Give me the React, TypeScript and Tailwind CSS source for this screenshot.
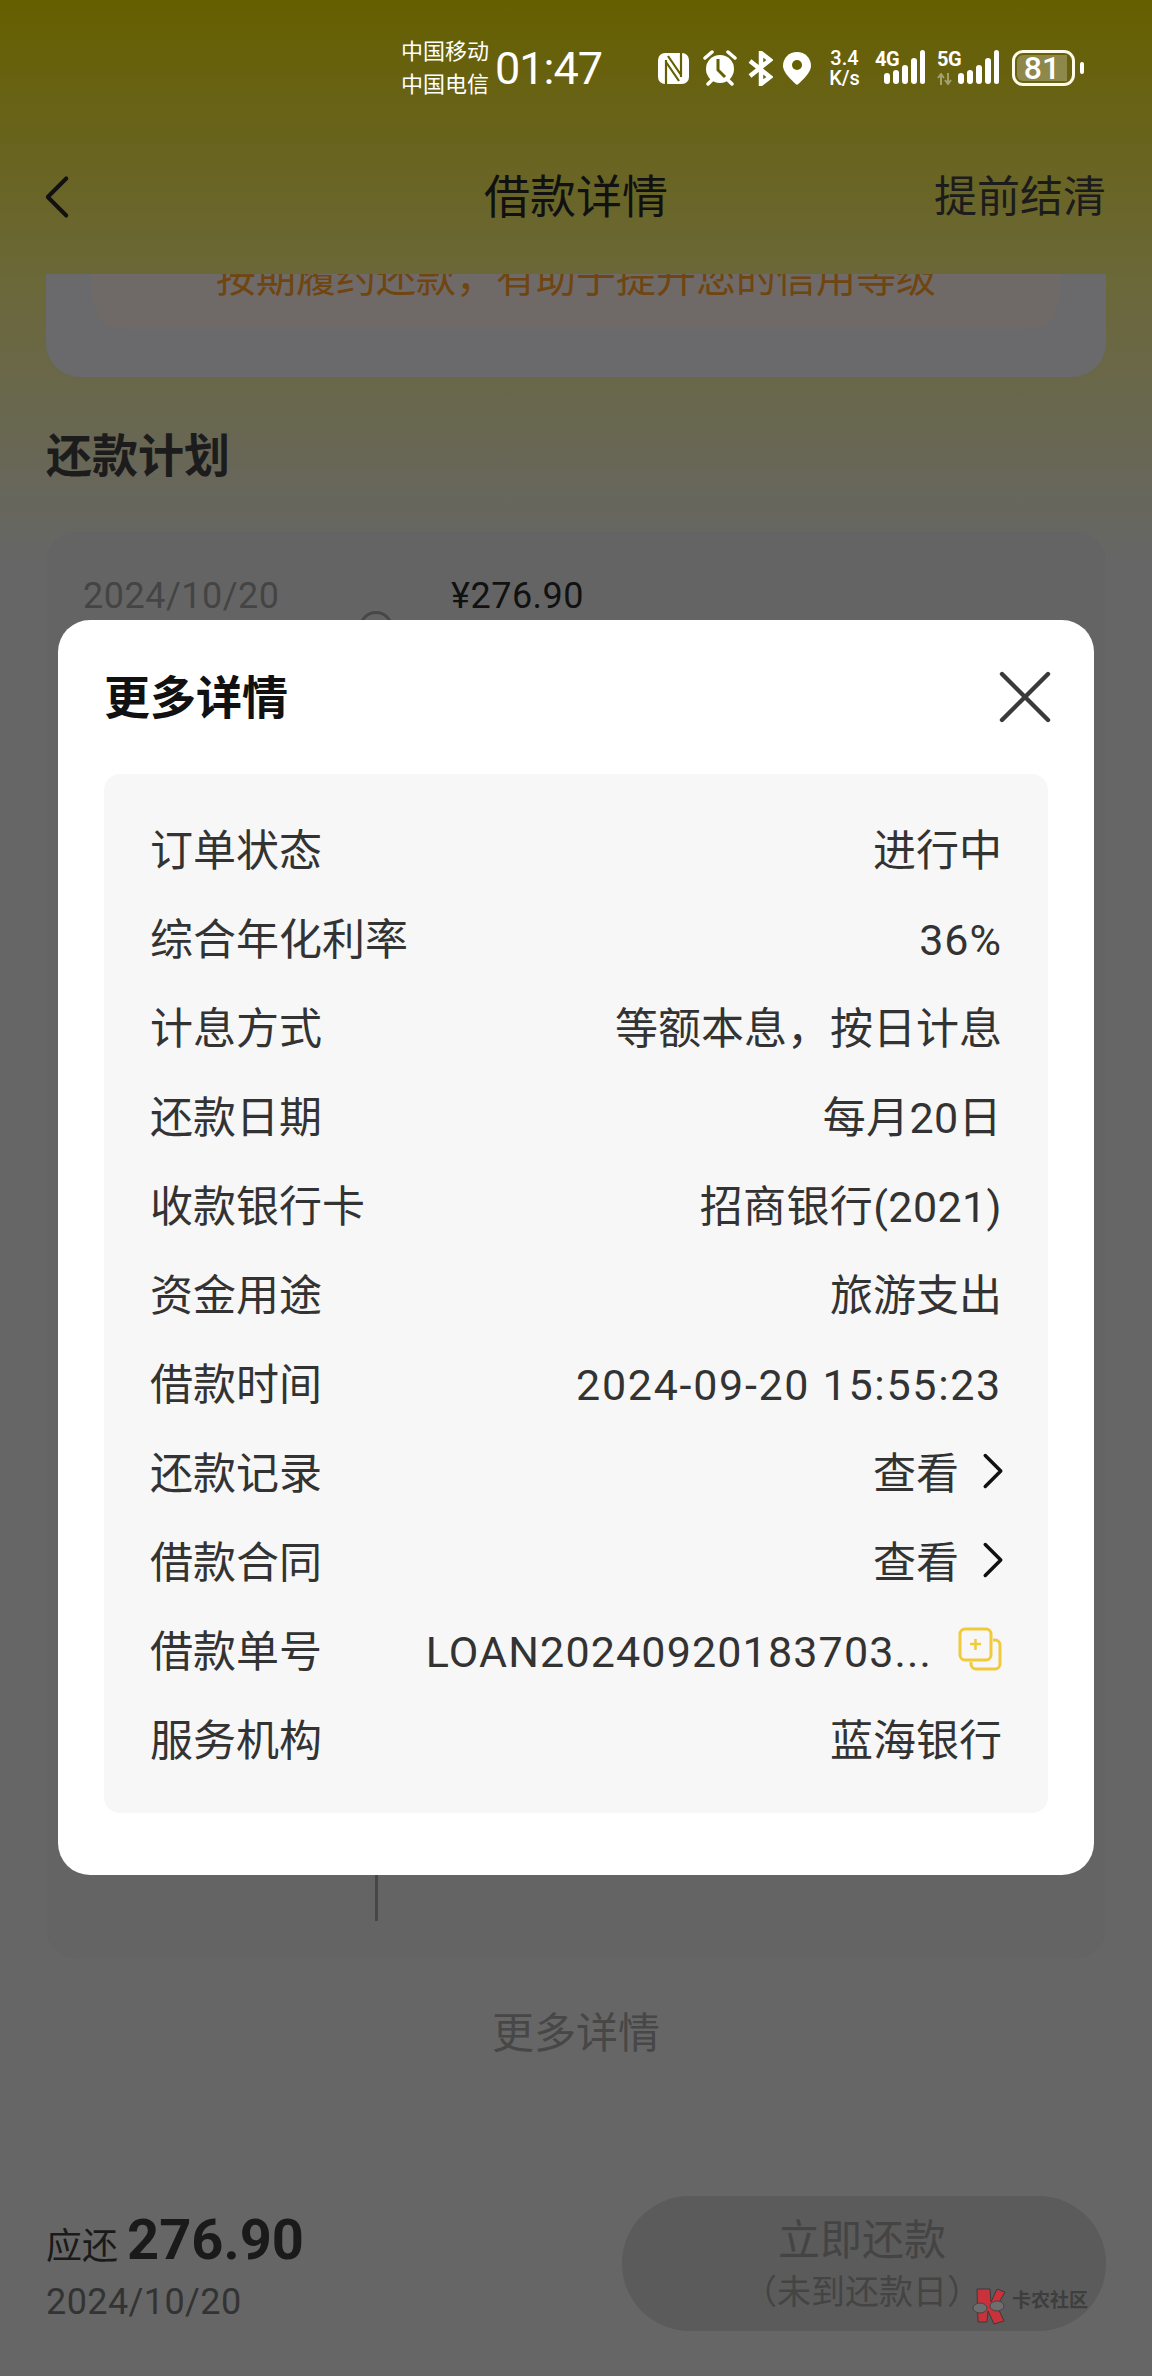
import { ChevronLeft, ChevronRight, X } from 'lucide-react';

const detailRows = [
  { label: '订单状态', value: '进行中' },
  { label: '综合年化利率', value: '36%', spacing: 'tracking-[1px]' },
  { label: '计息方式', value: '等额本息，按日计息' },
  { label: '还款日期', value: '每月20日', spacing: 'tracking-[0.4px]' },
  { label: '收款银行卡', value: '招商银行(2021)', spacing: 'tracking-[0.4px]' },
  { label: '资金用途', value: '旅游支出' },
  { label: '借款时间', value: '2024-09-20 15:55:23', spacing: 'tracking-[1.7px]' },
  { label: '还款记录', value: '查看', link: true },
  { label: '借款合同', value: '查看', link: true },
  { label: '借款单号', value: 'LOAN20240920183703...', spacing: 'tracking-[1.15px]', copy: true },
  { label: '服务机构', value: '蓝海银行' },
];

function SignalIcon({ label, wide }: { label: string; wide?: boolean }) {
  return (
    <div className={`relative h-[36px] ${wide ? 'w-[62px]' : 'w-[50px]'}`}>
      <span className="absolute top-[-1px] left-0 text-[20px] leading-[20px] font-bold tracking-[-0.5px] text-white">{label}</span>
      {wide && (
        <svg className="absolute bottom-[1px] left-0" width="15" height="12" viewBox="0 0 15 12" fill="none" stroke="#fff" strokeOpacity="0.4" strokeWidth="2">
          <path d="M4 12V1M1 5l3-4 3 4M11 0v11M8 7l3 4 3-4" />
        </svg>
      )}
      <svg className="absolute top-0 right-0" width="41" height="36" viewBox="0 0 41 36" fill="#fff">
        <rect x="0" y="23" width="6" height="11" rx="3" />
        <rect x="9" y="20" width="6" height="14" rx="3" />
        <rect x="18" y="15" width="6" height="19" rx="3" />
        <rect x="27" y="8" width="6" height="26" rx="3" />
        <rect x="36" y="0" width="5" height="34" rx="2.5" />
      </svg>
    </div>
  );
}

function StatusBar() {
  return (
    <div className="flex h-[100px] items-center pt-[36px] pl-[401px] text-white">
      <div className="flex w-[94px] flex-col text-[22px] leading-[33px]">
        <span>中国移动</span>
        <span>中国电信</span>
      </div>
      <span className="w-[163px] text-[45px] leading-none tracking-[-1px]">01:47</span>
      {/* NFC */}
      <svg width="31" height="31" viewBox="0 0 31 31" className="mr-[13px]">
        <rect width="31" height="31" rx="7" fill="#fff" />
        <path d="M8 7v24M23 0v24M10 3l13 19M8 9l13 19" stroke="#665f00" strokeWidth="2.2" fill="none" />
      </svg>
      {/* alarm */}
      <svg width="36" height="36" viewBox="0 0 36 36" className="mr-[10px]">
        <circle cx="18" cy="19" r="14" fill="#fff" />
        <path d="M16 9v11l7 7" stroke="#665f00" strokeWidth="3" fill="none" />
        <path d="M3 8l7-6M33 8l-7-6M6 34l4-4M30 34l-4-4" stroke="#fff" strokeWidth="3.5" strokeLinecap="round" />
      </svg>
      {/* bluetooth */}
      <svg width="25" height="35" viewBox="0 0 25 35" className="mr-[10px]">
        <path d="M2 10l20 16-9 7V2l9 7L2 25" stroke="#fff" strokeWidth="4.5" fill="none" />
      </svg>
      {/* location */}
      <svg width="28" height="33" viewBox="0 0 28 33" className="mr-[17px]">
        <path d="M14 0C6 0 0 6 0 14c0 8 14 19 14 19s14-11 14-19C28 6 22 0 14 0z" fill="#fff" />
        <circle cx="14" cy="13" r="5" fill="#665f00" />
      </svg>
      <div className="mr-[14px] flex w-[33px] flex-col items-center text-[20px] leading-[20px] font-medium">
        <span>3.4</span>
        <span>K/s</span>
      </div>
      <div className="mr-[12px]">
        <SignalIcon label="4G" />
      </div>
      <div className="mr-[13px]">
        <SignalIcon label="5G" wide />
      </div>
      {/* battery */}
      <div className="relative flex h-[36px] w-[63px] items-center overflow-hidden rounded-[11px] border-[3px] border-[#fdfbe8]">
        <div className="absolute inset-y-[2px] left-[2px] w-[50px] rounded-l-[6px] bg-white/25" />
        <span className="relative w-full pr-[3px] text-center text-[32px] leading-none font-medium text-white">81</span>
      </div>
      <div className="ml-[5px] h-[12px] w-[4px] rounded-full bg-white" />
    </div>
  );
}

function NavBar() {
  return (
    <div className="relative flex h-[174px] items-center justify-center pt-[20px]">
      <ChevronLeft className="absolute top-[60px] left-[20px] h-[74px] w-[74px] text-[#111]" strokeWidth={1.3} />
      <span className="text-[46px] text-[#111]">借款详情</span>
      <span className="absolute right-[46px] text-[43px] text-[#1c1c1c]">提前结清</span>
    </div>
  );
}

function Watermark() {
  return (
    <div className="absolute top-[2288px] left-[971px] flex items-center">
      <svg width="38" height="37" viewBox="0 0 38 37">
        <path d="M6 1h13l1 13 6-13 8 3-8 14 7 15-10 3-6-13-1 11H7z" fill="#c9313b" stroke="#3a3a3a" strokeWidth="1" />
        <ellipse cx="9" cy="20" rx="7" ry="5" fill="#6e6e6e" stroke="#444" />
        <ellipse cx="26" cy="18" rx="7" ry="5" fill="#6e6e6e" stroke="#444" />
      </svg>
      <span className="mt-[-12px] ml-[3px] text-[19px] leading-none font-bold text-[#3e3e3e]">卡农社区</span>
    </div>
  );
}

function DetailModal() {
  return (
    <div className="absolute top-[620px] left-[58px] h-[1255px] w-[1036px] rounded-[32px] bg-white">
      <div className="relative flex h-[154px] items-center pt-[3px] pl-[46px]">
        <span className="text-[46px] font-bold text-[#111]">更多详情</span>
        <X className="absolute top-[31px] right-[23px] h-[92px] w-[92px] text-[#3a3a3a]" strokeWidth={1.15} />
      </div>
      <div className="mx-[46px] rounded-[16px] bg-[#f7f7f7] px-[46px] py-[30px] text-[43px] text-[#333]">
        {detailRows.map((row) => (
          <div key={row.label} className="flex h-[89px] items-center justify-between pt-[5px]">
            <span>{row.label}</span>
            <div className="flex items-center">
              <span className={row.spacing}>{row.value}</span>
              {row.link && <ChevronRight className="mt-[-6px] mr-[-22px] ml-[3px] h-[62px] w-[62px] text-[#111]" strokeWidth={1.35} />}
              {row.copy && (
                <svg width="44" height="44" viewBox="0 0 44 44" fill="none" stroke="#f0c93c" strokeWidth="3" className="mt-[-6px] ml-[26px]">
                  <rect x="2" y="2" width="31" height="31" rx="5" />
                  <path d="M35 13h2a5 5 0 0 1 5 5v19a5 5 0 0 1-5 5H18a5 5 0 0 1-5-5v-2" />
                  <path d="M12 17h11M17.5 12v11" strokeWidth="2.5" />
                </svg>
              )}
            </div>
          </div>
        ))}
      </div>
    </div>
  );
}

export default function App() {
  return (
    <div
      className="relative h-[2376px] w-[1152px] overflow-hidden bg-[linear-gradient(to_bottom,#665f00_0px,#6b6839_280px,#666666_560px)]"
      style={{ fontFamily: "Roboto, 'Noto Sans CJK SC', sans-serif" }}
    >
      <StatusBar />
      <NavBar />

      {/* scrolled content, clipped by the header */}
      <div className="flex h-[1878px] flex-col overflow-hidden px-[46px]">
        <div className="mt-[-100px] h-[203px] shrink-0 rounded-b-[34px] bg-[#6a6a6d]">
          <div className="mx-[46px] flex h-[156px] items-end justify-center rounded-b-[34px] bg-[#6f6967] pb-[25px] text-[40px] leading-[52px] text-[#6f4510]">
            按期履约还款，有助于提升您的信用等级
          </div>
        </div>
        <div className="mt-[50px] text-[46px] leading-[58px] font-bold text-[#1c1c1c]">还款计划</div>
        <div className="relative mt-[47px] h-[1426px] shrink-0 rounded-[30px] bg-[#646464] pt-[42px] pl-[37px]">
          <div className="flex text-[36px] leading-[44px] tracking-[0.5px]">
            <span className="w-[368px] text-[#444]">2024/10/20</span>
            <span className="text-[#111]">¥276.90</span>
          </div>
          <div className="absolute top-[79px] left-[313px] h-[34px] w-[34px] rounded-full border-[3px] border-[#474747]" />
          <div className="absolute top-[113px] bottom-[37px] left-[329px] w-[3px] bg-[#474747]" />
        </div>
        <div className="mt-[48px] text-center text-[42px] leading-[56px] text-[#474747]">更多详情</div>
      </div>

      {/* bottom bar */}
      <div className="flex h-[224px] items-start justify-between bg-[#666] px-[46px] pt-[44px]">
        <div className="pt-[14px]">
          <div className="flex items-baseline gap-[9px]">
            <span className="text-[36px] leading-[60px] text-[#1a1a1a]">应还</span>
            <span className="text-[56px] leading-[60px] font-bold text-[#1a1a1a]">276.90</span>
          </div>
          <div className="mt-[3px] text-[36px] leading-[44px] tracking-[0.4px] text-[#333]">2024/10/20</div>
        </div>
        <div className="flex h-[135px] w-[484px] flex-col items-center justify-center rounded-full bg-[#5b5b5b] pt-[2px] pr-[4px] text-[#444]">
          <span className="text-[42px] leading-[54px]">立即还款</span>
          <span className="text-[34px] leading-[48px]">（未到还款日）</span>
        </div>
      </div>

      <DetailModal />
      <Watermark />
    </div>
  );
}
